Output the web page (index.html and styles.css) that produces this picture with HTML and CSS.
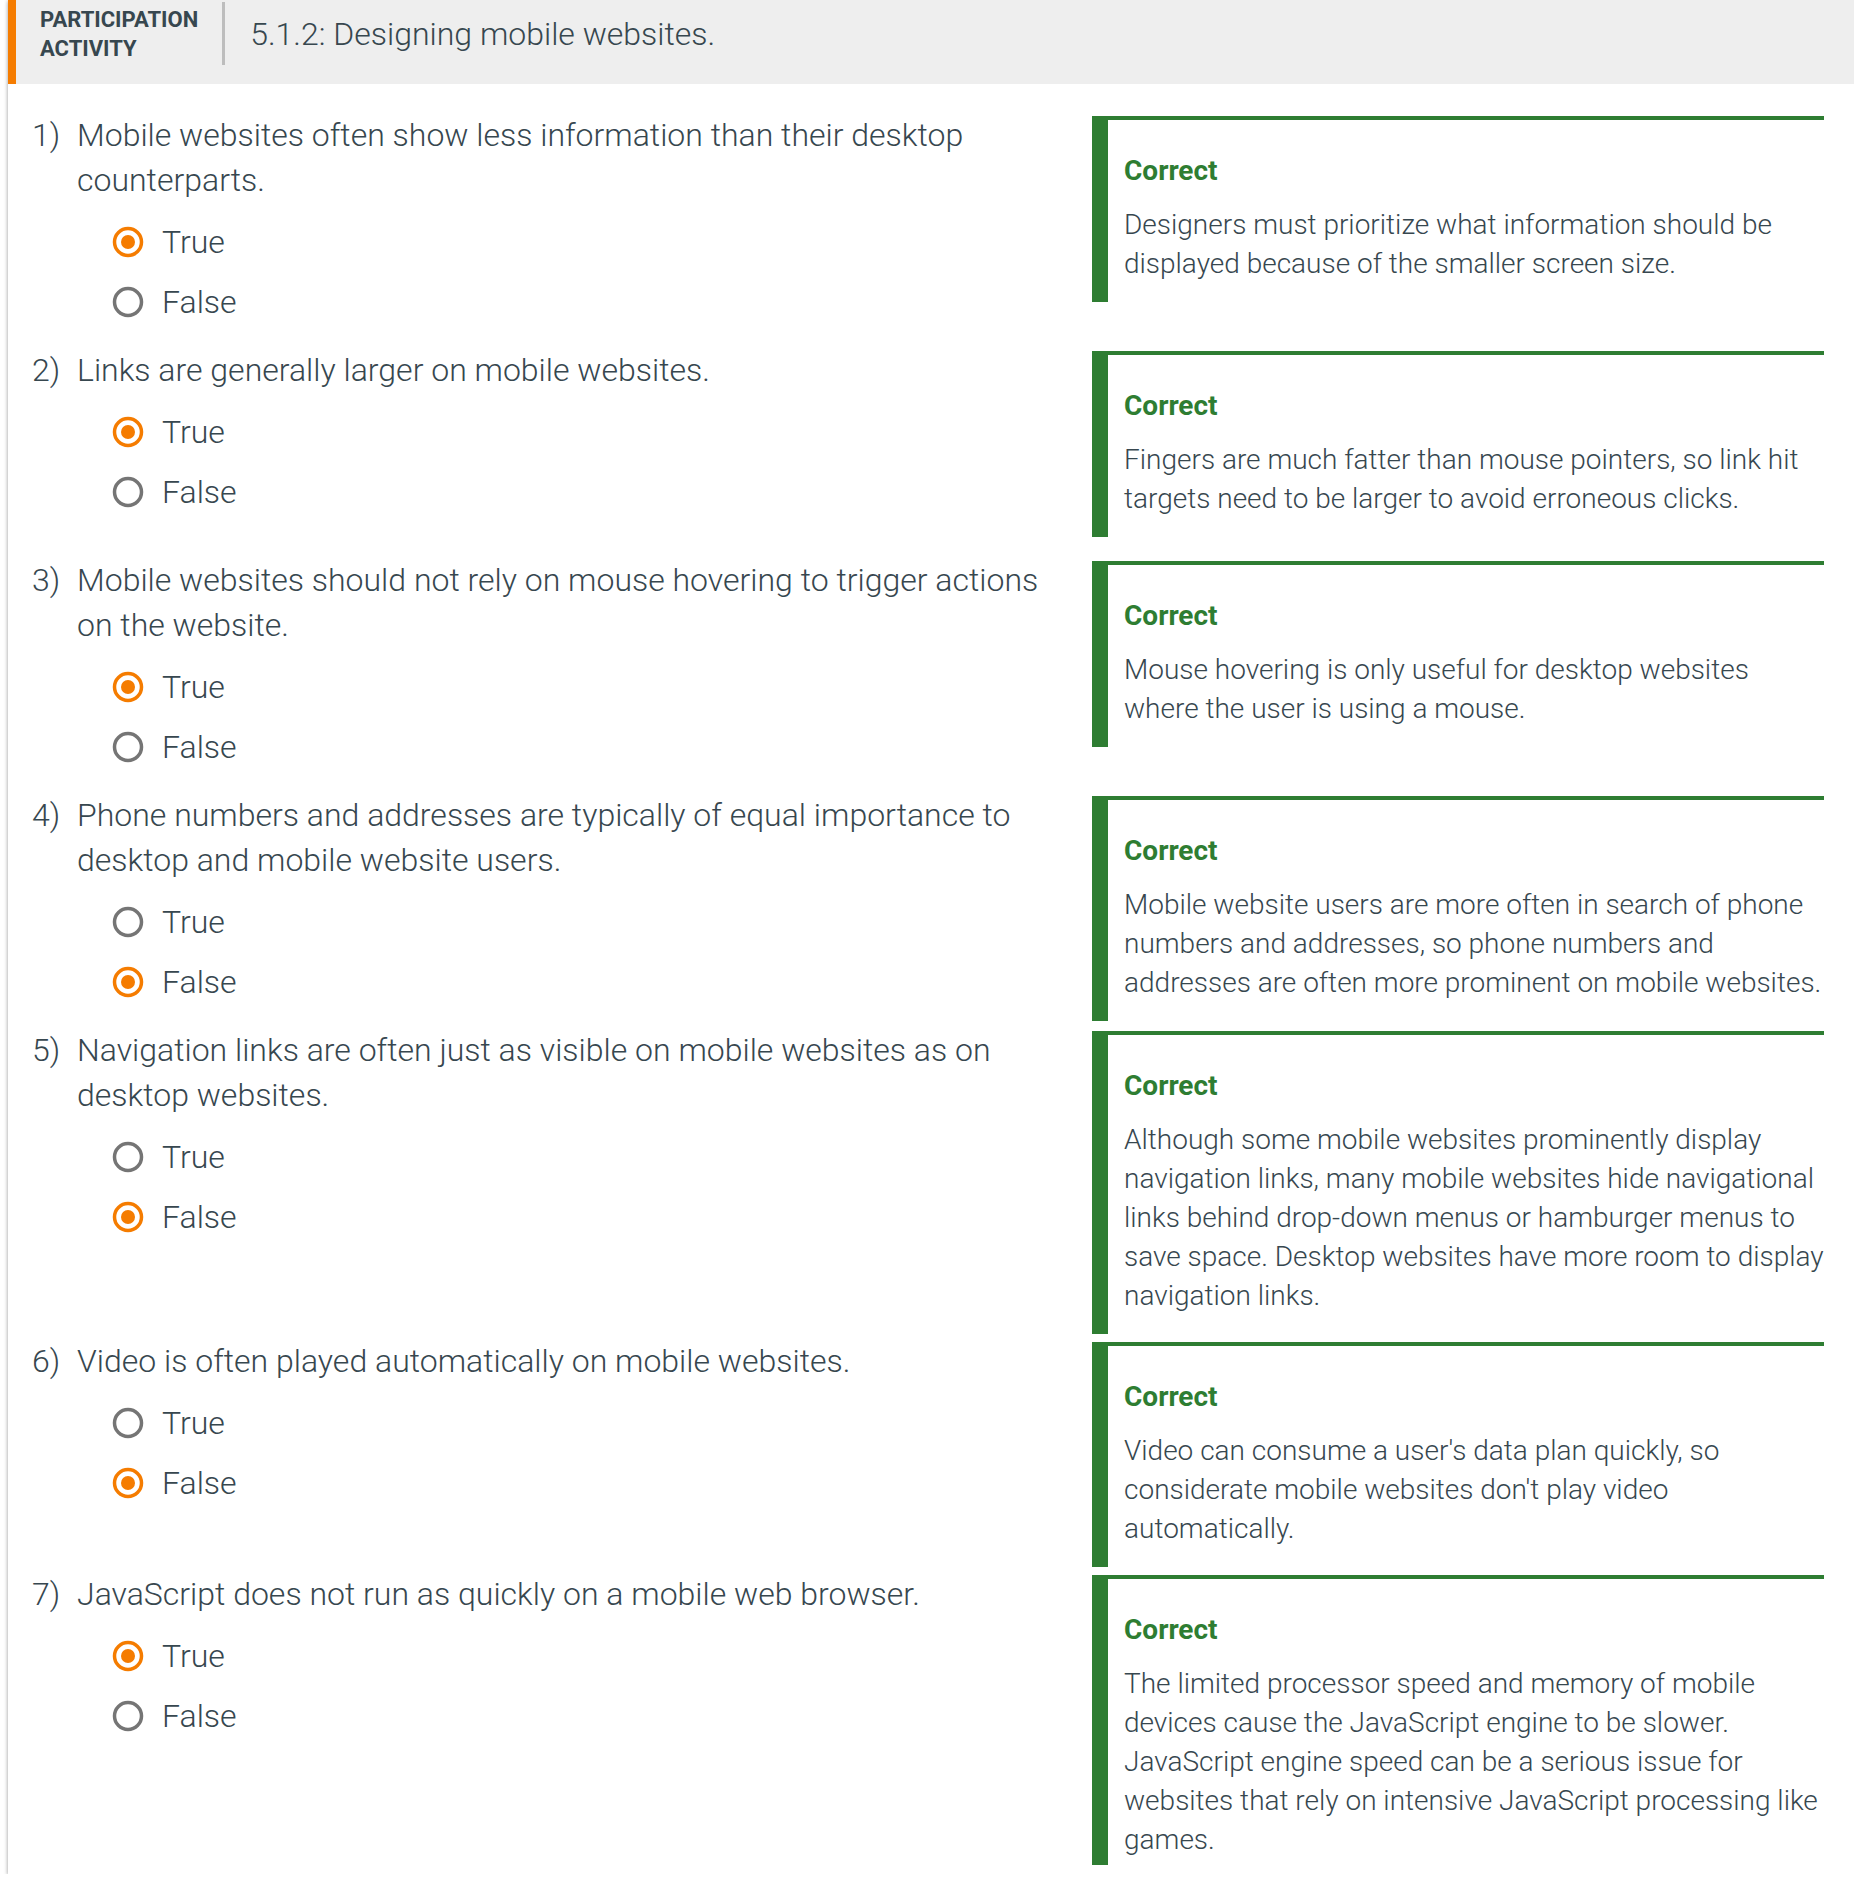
FILE: index.html
```html
<!DOCTYPE html>
<html lang="en">
<head>
<meta charset="utf-8">
<title>5.1.2: Designing mobile websites.</title>
<link rel="stylesheet" href="styles.css">
</head>
<body>
<div class="card">
  <div class="header">
    <div class="label">PARTICIPATION<br>ACTIVITY</div>
    <div class="divider"></div>
    <div class="title">5.1.2: Designing mobile websites.</div>
  </div>
  <div class="content">

    <div class="row">
      <div class="question">
        <div class="qtext"><span class="num">1)</span><span class="qbody">Mobile websites often show less information than their desktop counterparts.</span></div>
        <div class="answers">
          <div class="answer"><svg class="radio on" viewBox="0 0 32 32"><circle cx="16" cy="16" r="13.5"/><circle class="dot" cx="16" cy="16" r="7"/></svg><span>True</span></div>
          <div class="answer"><svg class="radio" viewBox="0 0 32 32"><circle cx="16" cy="16" r="13.5"/></svg><span>False</span></div>
        </div>
      </div>
      <div class="feedback">
        <div class="fb-title">Correct</div>
        <div class="fb-text">Designers must prioritize what information should be displayed because of the smaller screen size.</div>
      </div>
    </div>

    <div class="row">
      <div class="question question-spaced">
        <div class="qtext"><span class="num">2)</span><span class="qbody">Links are generally larger on mobile websites.</span></div>
        <div class="answers">
          <div class="answer"><svg class="radio on" viewBox="0 0 32 32"><circle cx="16" cy="16" r="13.5"/><circle class="dot" cx="16" cy="16" r="7"/></svg><span>True</span></div>
          <div class="answer"><svg class="radio" viewBox="0 0 32 32"><circle cx="16" cy="16" r="13.5"/></svg><span>False</span></div>
        </div>
      </div>
      <div class="feedback">
        <div class="fb-title">Correct</div>
        <div class="fb-text">Fingers are much fatter than mouse pointers, so link hit targets need to be larger to avoid erroneous clicks.</div>
      </div>
    </div>

    <div class="row">
      <div class="question">
        <div class="qtext"><span class="num">3)</span><span class="qbody">Mobile websites should not rely on mouse hovering to trigger actions on the website.</span></div>
        <div class="answers">
          <div class="answer"><svg class="radio on" viewBox="0 0 32 32"><circle cx="16" cy="16" r="13.5"/><circle class="dot" cx="16" cy="16" r="7"/></svg><span>True</span></div>
          <div class="answer"><svg class="radio" viewBox="0 0 32 32"><circle cx="16" cy="16" r="13.5"/></svg><span>False</span></div>
        </div>
      </div>
      <div class="feedback">
        <div class="fb-title">Correct</div>
        <div class="fb-text">Mouse hovering is only useful for desktop websites where the user is using a mouse.</div>
      </div>
    </div>

    <div class="row">
      <div class="question">
        <div class="qtext"><span class="num">4)</span><span class="qbody">Phone numbers and addresses are typically of equal importance to desktop and mobile website users.</span></div>
        <div class="answers">
          <div class="answer"><svg class="radio" viewBox="0 0 32 32"><circle cx="16" cy="16" r="13.5"/></svg><span>True</span></div>
          <div class="answer"><svg class="radio on" viewBox="0 0 32 32"><circle cx="16" cy="16" r="13.5"/><circle class="dot" cx="16" cy="16" r="7"/></svg><span>False</span></div>
        </div>
      </div>
      <div class="feedback">
        <div class="fb-title">Correct</div>
        <div class="fb-text">Mobile website users are more often in search of phone numbers and addresses, so phone numbers and addresses are often more prominent on mobile websites.</div>
      </div>
    </div>

    <div class="row">
      <div class="question">
        <div class="qtext"><span class="num">5)</span><span class="qbody">Navigation links are often just as visible on mobile websites as on desktop websites.</span></div>
        <div class="answers">
          <div class="answer"><svg class="radio" viewBox="0 0 32 32"><circle cx="16" cy="16" r="13.5"/></svg><span>True</span></div>
          <div class="answer"><svg class="radio on" viewBox="0 0 32 32"><circle cx="16" cy="16" r="13.5"/><circle class="dot" cx="16" cy="16" r="7"/></svg><span>False</span></div>
        </div>
      </div>
      <div class="feedback">
        <div class="fb-title">Correct</div>
        <div class="fb-text">Although some mobile websites prominently display navigation links, many mobile websites hide navigational links behind drop-down menus or hamburger menus to save space. Desktop websites have more room to display navigation links.</div>
      </div>
    </div>

    <div class="row">
      <div class="question">
        <div class="qtext"><span class="num">6)</span><span class="qbody">Video is often played automatically on mobile websites.</span></div>
        <div class="answers">
          <div class="answer"><svg class="radio" viewBox="0 0 32 32"><circle cx="16" cy="16" r="13.5"/></svg><span>True</span></div>
          <div class="answer"><svg class="radio on" viewBox="0 0 32 32"><circle cx="16" cy="16" r="13.5"/><circle class="dot" cx="16" cy="16" r="7"/></svg><span>False</span></div>
        </div>
      </div>
      <div class="feedback">
        <div class="fb-title">Correct</div>
        <div class="fb-text">Video can consume a user's data plan quickly, so considerate mobile websites don't play video automatically.</div>
      </div>
    </div>

    <div class="row">
      <div class="question">
        <div class="qtext"><span class="num">7)</span><span class="qbody">JavaScript does not run as quickly on a mobile web browser.</span></div>
        <div class="answers">
          <div class="answer"><svg class="radio on" viewBox="0 0 32 32"><circle cx="16" cy="16" r="13.5"/><circle class="dot" cx="16" cy="16" r="7"/></svg><span>True</span></div>
          <div class="answer"><svg class="radio" viewBox="0 0 32 32"><circle cx="16" cy="16" r="13.5"/></svg><span>False</span></div>
        </div>
      </div>
      <div class="feedback">
        <div class="fb-title">Correct</div>
        <div class="fb-text">The limited processor speed and memory of mobile devices cause the JavaScript engine to be slower. JavaScript engine speed can be a serious issue for websites that rely on intensive JavaScript processing like games.</div>
      </div>
    </div>

  </div>
</div>
</body>
</html>
```

FILE: styles.css
```css
html, body {
  margin: 0;
  padding: 0;
  background: #ffffff;
}

body {
  font-family: Roboto, "Liberation Sans", Arial, sans-serif;
  color: #37474f;
}

.card {
  margin-left: 8px;
  background: #ffffff;
  box-shadow: 0 2px 4px rgba(0, 0, 0, 0.25), -1px 0 3px rgba(0, 0, 0, 0.12);
  height: 1874px;
  overflow: hidden;
  box-sizing: border-box;
}

.header {
  display: flex;
  align-items: center;
  background: #eeeeee;
  border-left: 8px solid #f57c00;
  padding: 2px 0 19px 24px;
}

.label {
  font-weight: 700;
  font-size: 22px;
  line-height: 29px;
  color: #37474f;
  padding-right: 24px;
}

.divider {
  width: 3px;
  height: 63px;
  background: #bdbdbd;
}

.title {
  font-weight: 300;
  font-size: 32px;
  line-height: 36px;
  padding-left: 25px;
  color: #37474f;
}

.content {
  padding: 32px 30px 0 24px;
}

.row {
  display: flex;
  align-items: flex-start;
  justify-content: space-between;
}

.question {
  width: 1030px;
  margin-bottom: 19px;
}

.question-spaced {
  padding-bottom: 20px;
}

.qtext {
  display: flex;
  font-size: 32px;
  font-weight: 300;
  line-height: 45px;
  margin-top: -3px;
}

.num {
  width: 45px;
  flex: none;
}

.qbody {
  flex: 1;
}

.answers {
  margin-top: 9px;
  padding-left: 80px;
}

.answer {
  display: flex;
  align-items: center;
  height: 60px;
  font-size: 32px;
  font-weight: 300;
}

.radio {
  width: 32px;
  height: 32px;
  margin-right: 18px;
  flex: none;
}

.radio circle {
  fill: none;
  stroke: #757575;
  stroke-width: 3.5;
}

.radio.on circle {
  stroke: #f57c00;
}

.radio.on circle.dot {
  fill: #f57c00;
  stroke: none;
}

.feedback {
  width: 732px;
  flex: none;
  box-sizing: border-box;
  border-top: 4px solid #2e7d32;
  border-left: 16px solid #2e7d32;
  padding: 31px 0 19px 16px;
  margin-bottom: 8px;
}

.row:last-child .feedback {
  padding-bottom: 6px;
}

.fb-title {
  color: #2e7d32;
  font-weight: 700;
  font-size: 28px;
  line-height: 39px;
  margin-bottom: 15px;
}

.fb-text {
  font-size: 28px;
  font-weight: 300;
  line-height: 39px;
}
```
